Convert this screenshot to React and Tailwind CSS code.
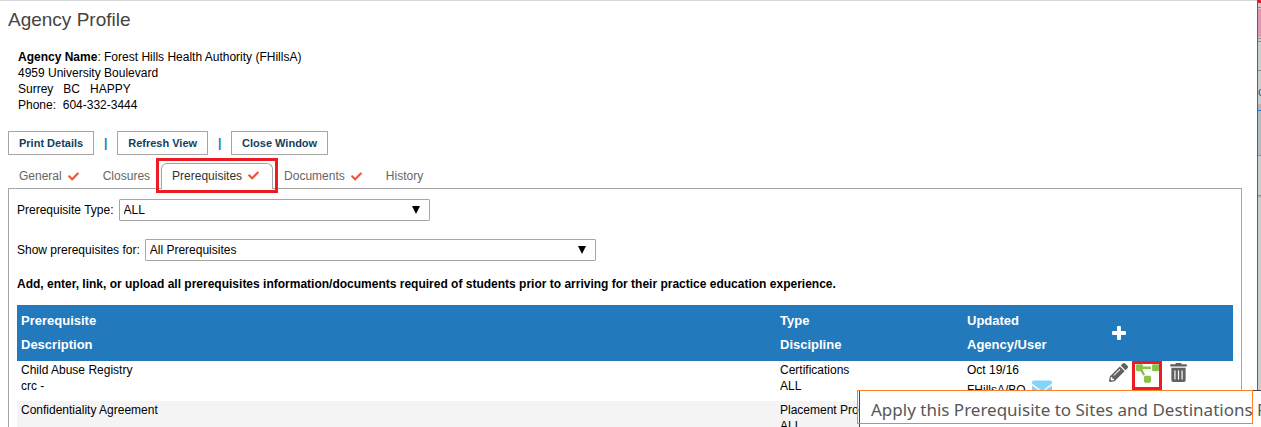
import React from "react";
import { FaCheck, FaEnvelope, FaPencilAlt, FaProjectDiagram, FaTrashAlt } from "react-icons/fa";

const tabs = [
  { label: "General", checked: true },
  { label: "Closures" },
  { label: "Prerequisites", checked: true, active: true },
  { label: "Documents", checked: true },
  { label: "History" },
];

const rows = [
  {
    name: "Child Abuse Registry",
    description: "crc -",
    type: "Certifications",
    discipline: "ALL",
    updated: "Oct 19/16",
    user: "FHillsA/BO",
  },
  {
    name: "Confidentiality Agreement",
    description: "",
    type: "Placement Pro",
    discipline: "ALL",
  },
];

function ActionButton({ children }) {
  return (
    <button className="h-6 px-2.5 border border-[#a6a6a6] bg-white text-[11px] font-bold text-[#133f5f]">
      {children}
    </button>
  );
}

function Divider() {
  return <span className="w-[23px] text-center font-bold text-[#2279bc]">|</span>;
}

function Tab({ label, checked, active }) {
  return (
    <button
      className={
        active
          ? "relative h-[26px] pl-2.5 pr-[11px] pb-0.5 flex items-center border border-b-0 border-[#a6a6a6] rounded-t-md bg-white text-[#333]"
          : "h-[26px] px-[11px] flex items-center text-[#666]"
      }
    >
      {label}
      {checked && <FaCheck size={11} className="ml-1.5 mr-0.5 text-[#f0563d]" />}
      {active && <span className="absolute -inset-x-1.5 -top-1.5 -bottom-1 border-3 border-[#ed1c24]"></span>}
    </button>
  );
}

function SelectField({ id, label, option, wide }) {
  return (
    <div className="flex items-center h-[22px]">
      <label htmlFor={id}>{label}</label>
      <div className={wide ? "relative ml-[5px] w-[451px]" : "relative ml-[5px] w-[311px]"}>
        <select
          id={id}
          className="block appearance-none w-full h-[22px] pl-1 border border-[#a6a6a6] rounded-[1px] bg-white"
        >
          <option>{option}</option>
        </select>
        <svg
          viewBox="0 0 8 8"
          className="absolute right-2.5 top-[7px] w-2 h-2 pointer-events-none"
        >
          <path d="M0 0h8L4 8z" />
        </svg>
      </div>
    </div>
  );
}

function RowActions() {
  return (
    <div className="flex items-start text-[#616161]">
      <button aria-label="Edit" className="mt-0.5">
        <FaPencilAlt size={19} />
      </button>
      <button
        aria-label="Apply to sites"
        className="ml-1 w-[30px] h-[29px] flex justify-end border-3 border-[#ed1c24] text-[#8bc34a]"
      >
        <FaProjectDiagram className="w-[23px] h-[19px] shrink-0" />
      </button>
      <button aria-label="Delete" className="ml-[7px] mt-0.5">
        <FaTrashAlt size={19} />
      </button>
    </div>
  );
}

function PrerequisiteTable() {
  return (
    <table className="mt-[13px] w-full table-fixed text-left">
      <colgroup>
        <col />
        <col className="w-[187px]" />
        <col className="w-[141px]" />
        <col className="w-[129px]" />
      </colgroup>
      <thead className="bg-[#2279bc] text-white text-[13px] leading-6">
        <tr>
          <th className="px-1 py-1">
            Prerequisite
            <br />
            Description
          </th>
          <th className="px-1 py-1">
            Type
            <br />
            Discipline
          </th>
          <th className="px-1 py-1">
            Updated
            <br />
            Agency/User
          </th>
          <th className="px-2">
            <button aria-label="Add" className="block">
              <svg viewBox="0 0 14 14" className="w-3.5 h-3.5" fill="currentColor">
                <rect x="5" width="4" height="14" rx="1" />
                <rect y="5" width="14" height="4" rx="1" />
              </svg>
            </button>
          </th>
        </tr>
      </thead>
      <tbody className="align-top">
        {rows.map((row) => (
          <tr key={row.name} className="h-10 odd:bg-white even:bg-[#f4f4f4]">
            <td className="px-1 py-px">
              {row.name}
              <br />
              {row.description}
            </td>
            <td className="px-1 py-px">
              {row.type}
              <br />
              {row.discipline}
            </td>
            <td className="px-1 py-px">
              {row.updated}
              {row.user && (
                <div className="flex items-end">
                  {row.user}
                  <FaEnvelope size={20} className="ml-1.5 text-[#81d4fa]" />
                </div>
              )}
            </td>
            <td className="pl-[5px]">{row.user && <RowActions />}</td>
          </tr>
        ))}
      </tbody>
    </table>
  );
}

// the page behind the popup window, only its left edge shows
function PageBehind() {
  return (
    <div className="w-1 shrink-0 flex flex-col overflow-hidden bg-[#cccfcf] border-l border-[#5f6264]">
      <div className="h-[3px] bg-[#e01b24]"></div>
      <div className="mt-1 h-px bg-[#8c8f90]"></div>
      <div className="mt-px h-7 bg-[#dd98b3]"></div>
      <div className="mt-px h-1 border-y border-[#8c8f90]"></div>
      <div className="mt-7 h-px bg-[#8c8f90]"></div>
      <div className="mt-[13px] h-5 leading-4 text-[#2c5282]">o</div>
      <div className="h-1.5 bg-[#adb6c2]"></div>
      <div className="h-px bg-[#1976d2]"></div>
      <div className="h-11 bg-[#b3bdc4]"></div>
      <div className="h-px bg-[#8c8f90]"></div>
      <div className="mt-[39px] h-[3px] border-t border-[#8c8f90] bg-[#b8bbbb]"></div>
    </div>
  );
}

function Tooltip() {
  return (
    <div className="absolute left-[859px] right-0 top-[390px] h-12 border-l border-t border-[#444] bg-white font-['Noto_Sans',sans-serif] text-[17px] text-[#575757] whitespace-pre overflow-hidden">
      <span className="block pl-[11px] leading-[38px]">
        {"Apply this Prerequisite to Sites and Destinations Prerequisite"}
      </span>
    </div>
  );
}

export default function App() {
  return (
    <div className="relative h-screen flex overflow-hidden bg-white font-['Liberation_Sans',Arial,sans-serif] text-xs text-black">
      <main className="flex-1 border-t border-[#d5d5da] pl-2 pr-[15px]">
        <h1 className="mt-[7px] text-[19px] leading-6 text-[#444]">Agency Profile</h1>
        <address className="mt-[17px] pl-2.5 not-italic whitespace-pre">
          <b>Agency Name</b>: Forest Hills Health Authority (FHillsA)
          <br />
          4959 University Boulevard
          <br />
          {"Surrey   BC   HAPPY"}
          <br />
          {"Phone:  604-332-3444"}
        </address>
        <div className="mt-[18px] flex items-center">
          <ActionButton>Print Details</ActionButton>
          <Divider />
          <ActionButton>Refresh View</ActionButton>
          <Divider />
          <ActionButton>Close Window</ActionButton>
        </div>
        <nav className="mt-2 flex">
          {tabs.map((tab) => (
            <Tab key={tab.label} {...tab} />
          ))}
        </nav>
        <section className="-mt-px h-screen border border-[#a6a6a6] px-2 pt-2.5">
          <SelectField id="type" label="Prerequisite Type:" option="ALL" />
          <div className="mt-[18px]">
            <SelectField id="show" label="Show prerequisites for:" option="All Prerequisites" wide />
          </div>
          <p className="mt-[15px] font-bold">
            Add, enter, link, or upload all prerequisites information/documents required of students
            prior to arriving for their practice education experience.
          </p>
          <PrerequisiteTable />
        </section>
      </main>
      <PageBehind />
      <Tooltip />
      <div className="absolute left-[857px] right-2 top-[390px] h-[34px] border border-[#ff7f27]"></div>
    </div>
  );
}
